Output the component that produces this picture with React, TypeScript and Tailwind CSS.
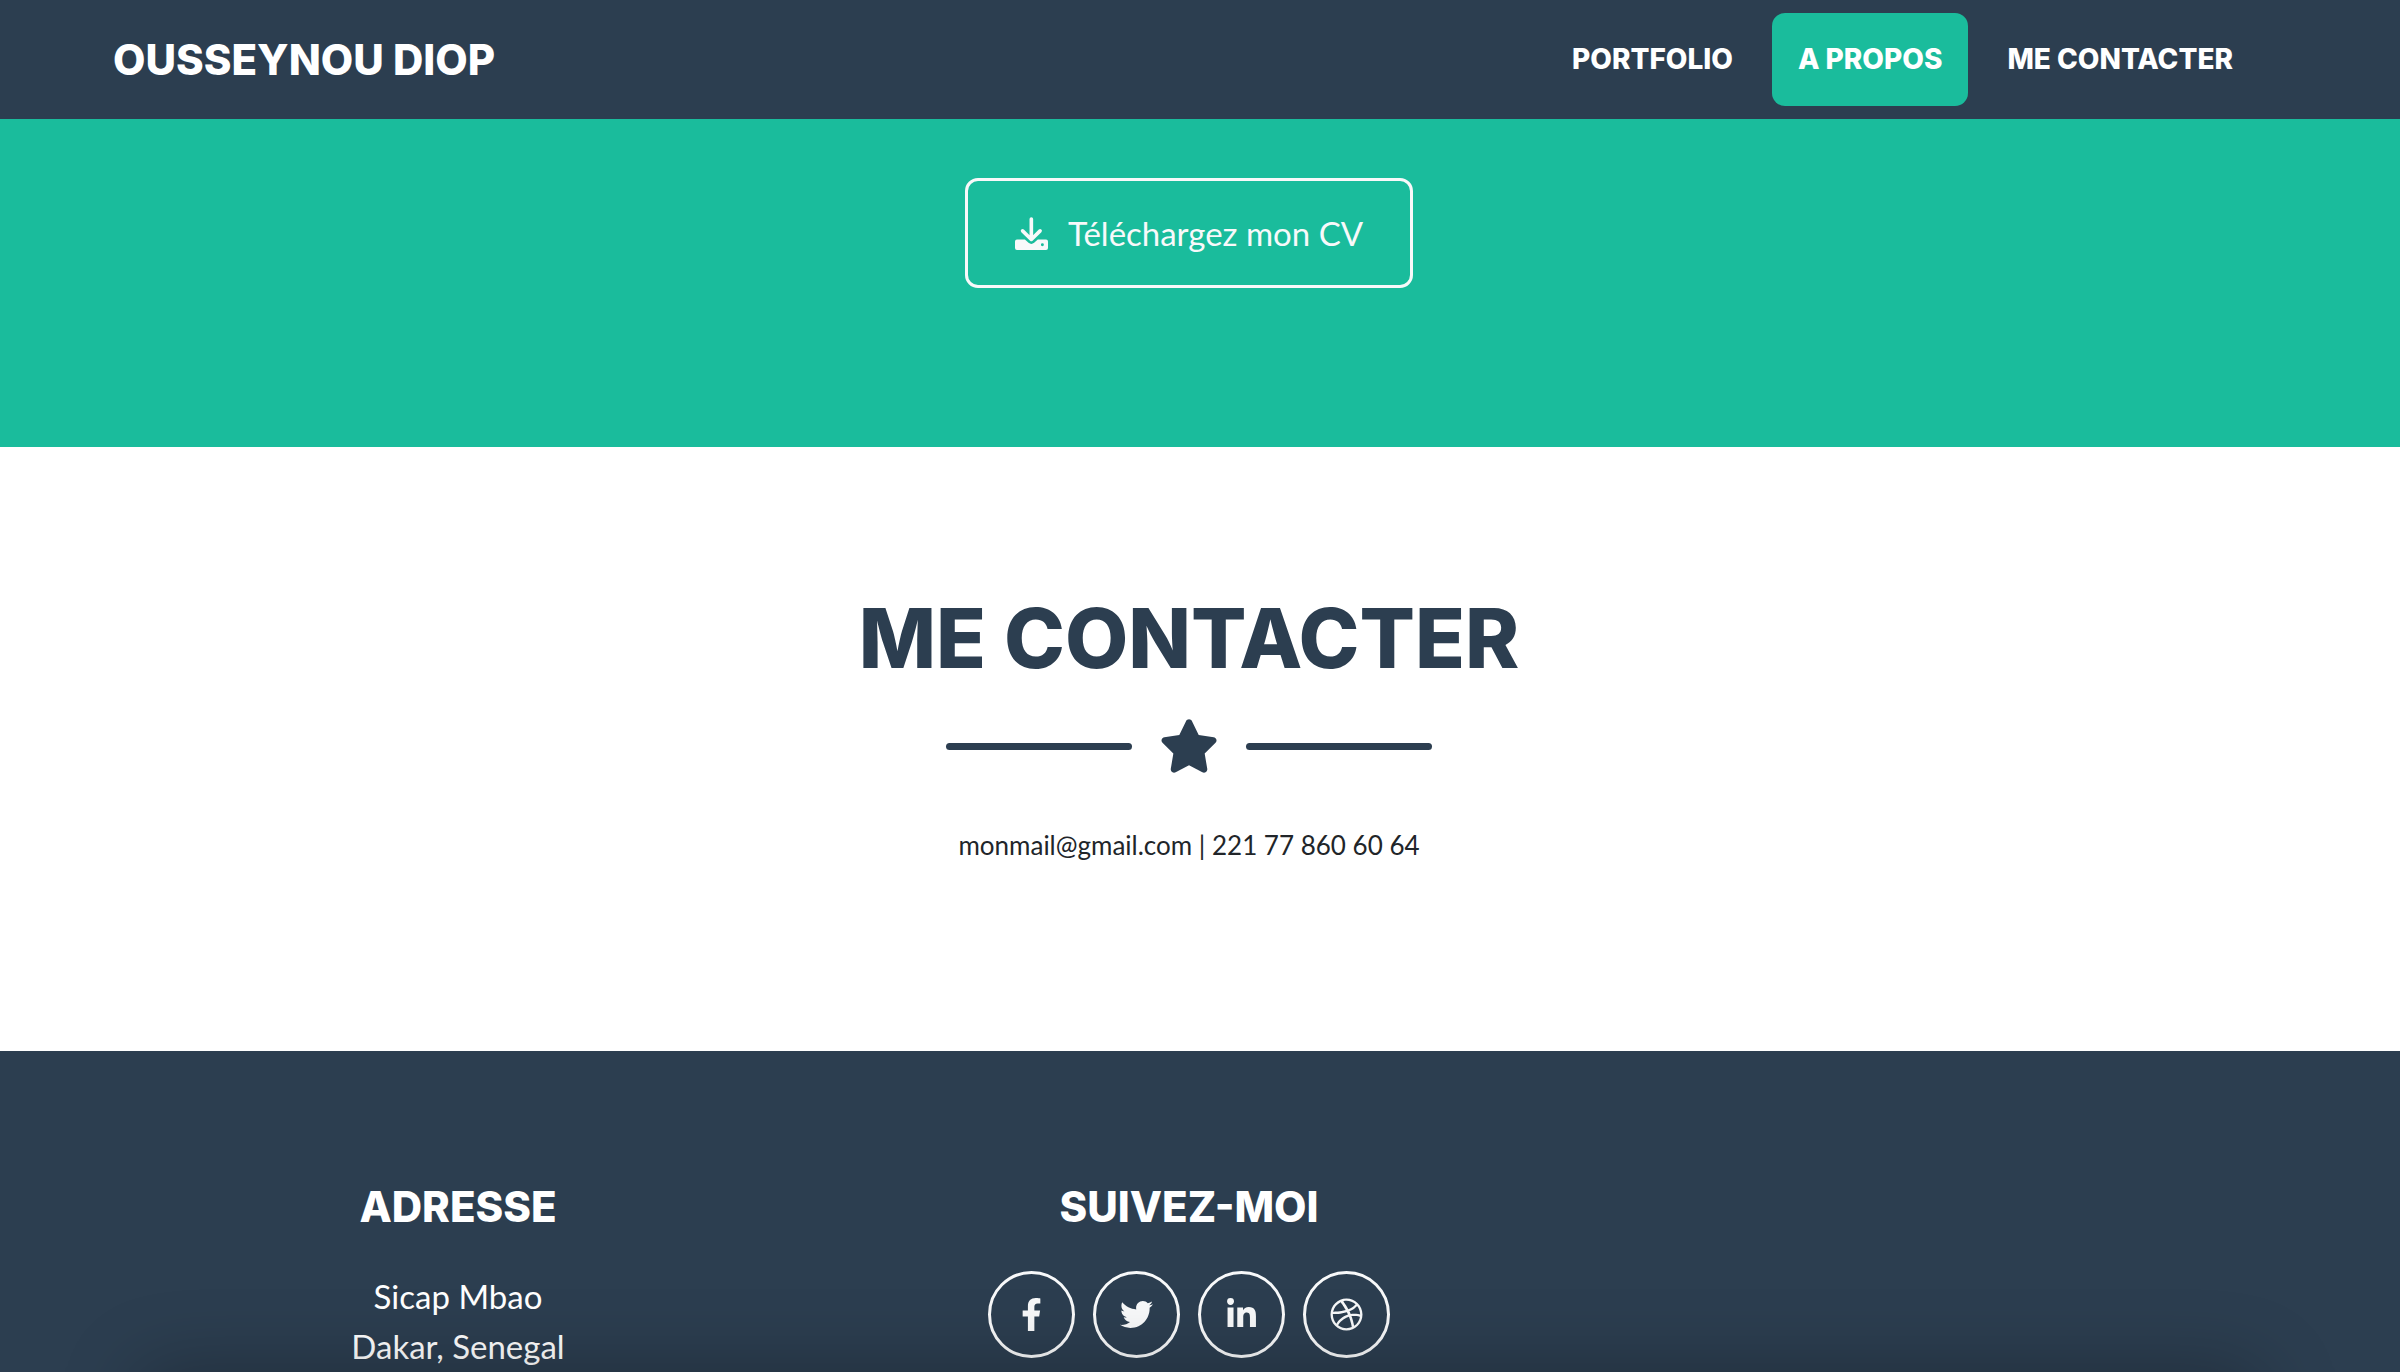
import type { IconType } from "react-icons";
import { FaFacebookF } from "react-icons/fa";
import { FaDribbble, FaLinkedinIn, FaStar, FaTwitter } from "react-icons/fa6";

const navLinks = [
  { label: "Portfolio", href: "#portfolio", active: false },
  { label: "A propos", href: "#about", active: true },
  { label: "Me contacter", href: "#contact", active: false },
];

const socials: { label: string; icon: IconType }[] = [
  { label: "Facebook", icon: FaFacebookF },
  { label: "Twitter", icon: FaTwitter },
  { label: "LinkedIn", icon: FaLinkedinIn },
  { label: "Dribbble", icon: FaDribbble },
];

function DownloadIcon() {
  return (
    <svg className="size-[33px]" viewBox="0 0 100 100" aria-hidden="true">
      <path
        d="M49.5 6V66M23 42L49.5 68L76 42"
        fill="none"
        stroke="currentColor"
        strokeWidth="11"
        strokeLinecap="round"
        strokeLinejoin="round"
      />
      <path
        fill="currentColor"
        fillRule="evenodd"
        d="M6 68H30L41 78Q49.5 85 58 78L69 68H94Q100 68 100 74V94Q100 100 94 100H6Q0 100 0 94V74Q0 68 6 68ZM83 79.500A4.500 4.500 0 1 0 83 88.500A4.500 4.500 0 1 0 83 79.500Z"
      />
    </svg>
  );
}

function Navbar() {
  return (
    <nav className="bg-[#2c3e50] pr-[22px] font-['Inter',sans-serif] uppercase text-white">
      <div className="mx-auto flex max-w-[2152px] items-center justify-between py-[13px]">
        <a href="#page-top" className="text-[42px] leading-[60px] font-extrabold">
          Ousseynou Diop
        </a>
        <ul className="flex items-center gap-[13px] pr-[6px]">
          {navLinks.map((link) => (
            <li key={link.href}>
              <a
                href={link.href}
                className={`block rounded-[13px] px-[26px] py-[26px] text-[28px] leading-[41px] font-extrabold ${
                  link.active ? "bg-[#1abc9c]" : ""
                }`}
              >
                {link.label}
              </a>
            </li>
          ))}
        </ul>
      </div>
    </nav>
  );
}

function About() {
  return (
    <section id="about" className="bg-[#1abc9c] pt-[59px] pr-[22px] pb-[159px] text-center">
      <a
        href="#cv"
        className="inline-flex items-center gap-5 rounded-[13px] border-3 border-[#f8f9fa] px-[47px] py-[27px] align-top text-[33px] leading-[50px] text-[#f8f9fa]"
      >
        <DownloadIcon />
        Téléchargez mon CV
      </a>
    </section>
  );
}

function Contact() {
  return (
    <section
      id="contact"
      className="flex flex-col items-center bg-white pt-[144px] pr-[22px] pb-[185px] text-[#212529]"
    >
      <h2 className="font-['Inter',sans-serif] text-[82px] leading-[96px] font-extrabold text-[#2c3e50] uppercase">
        Me contacter
      </h2>
      <div className="mt-[27px] flex items-center gap-[27px] text-[#2c3e50]">
        <span className="h-[7px] w-[186px] rounded-full bg-current" />
        <FaStar className="h-[64px] w-[60px]" aria-hidden="true" />
        <span className="h-[7px] w-[186px] rounded-full bg-current" />
      </div>
      <p className="mt-[47px] text-[26px] leading-[41px]">
        monmail@gmail.com | 221 77 860 60 64
      </p>
    </section>
  );
}

function Footer() {
  return (
    <footer className="flex-1 bg-[#2c3e50] pt-[132px] pr-[22px] text-center text-white">
      <div className="mx-auto grid max-w-[2193px] grid-cols-3">
        <div>
          <h4 className="mb-10 font-['Inter',sans-serif] text-[42px] leading-[48px] font-extrabold uppercase">
            Adresse
          </h4>
          <p className="text-[33px] leading-[50px]">
            Sicap Mbao
            <br />
            Dakar, Senegal
          </p>
        </div>
        <div>
          <h4 className="mb-10 font-['Inter',sans-serif] text-[42px] leading-[48px] font-extrabold uppercase">
            Suivez-moi
          </h4>
          <div className="flex justify-center gap-[18px]">
            {socials.map(({ label, icon: Icon }) => (
              <a
                key={label}
                href="#!"
                aria-label={label}
                className="flex size-[87px] items-center justify-center rounded-full border-3 border-[#f8f9fa] text-[33px] text-[#f8f9fa]"
              >
                <Icon aria-hidden="true" />
              </a>
            ))}
          </div>
        </div>
      </div>
    </footer>
  );
}

export default function App() {
  return (
    <div className="flex min-h-screen flex-col font-['Lato',sans-serif]">
      <Navbar />
      <About />
      <Contact />
      <Footer />
      {/* soft shadow rising from the bottom edge */}
      <div
        aria-hidden="true"
        className="pointer-events-none fixed inset-x-[140px] top-full h-60 rounded-2xl shadow-[0_0_80px_rgba(0,0,0,0.28)]"
      />
    </div>
  );
}
